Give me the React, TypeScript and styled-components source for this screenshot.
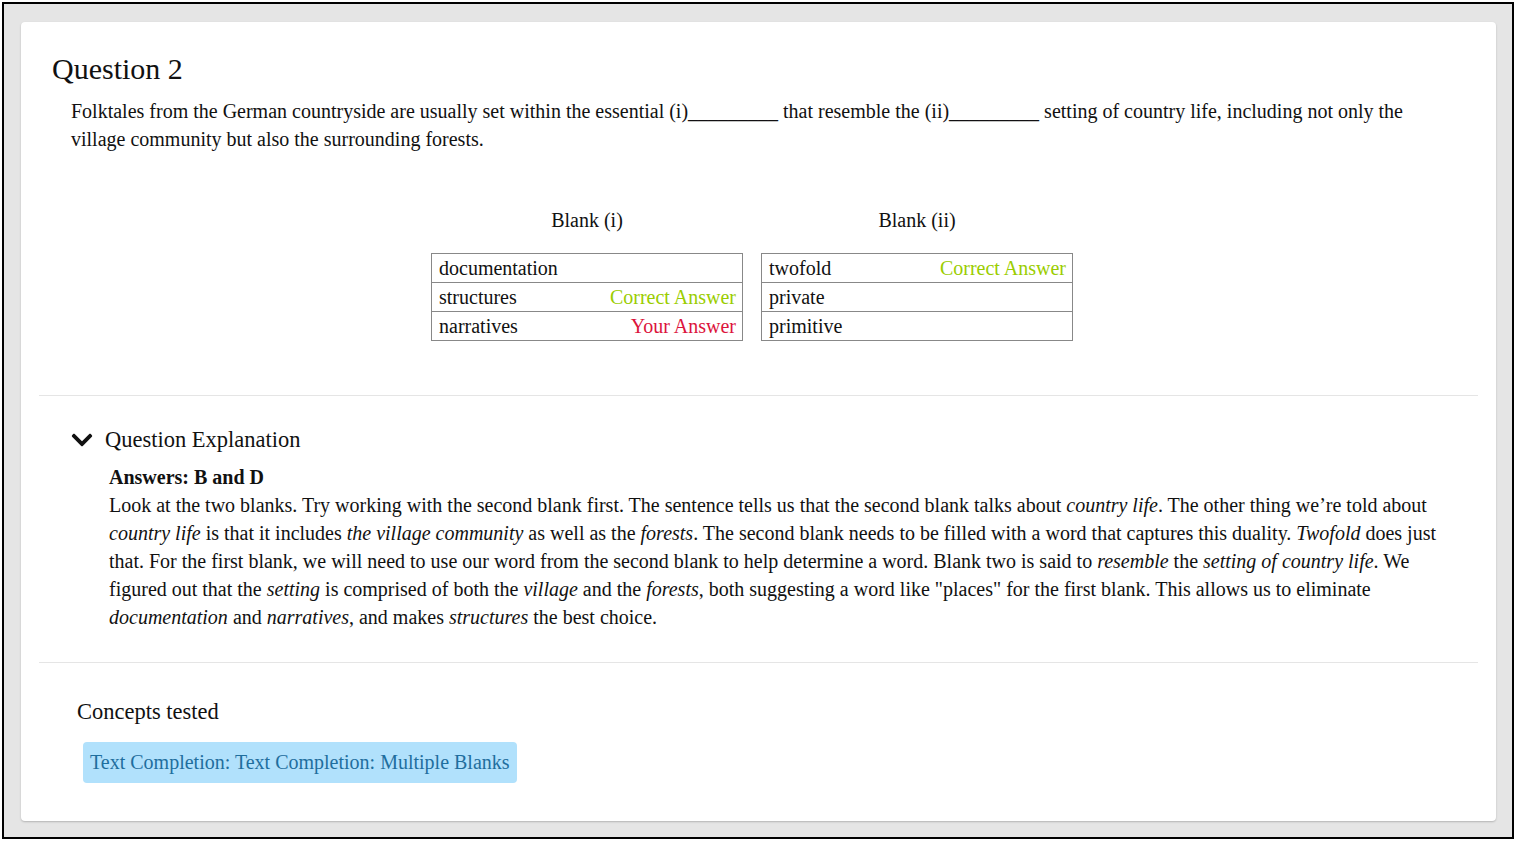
import React from 'react';
import styled, { createGlobalStyle } from 'styled-components';
import { FaChevronDown } from 'react-icons/fa';

const GlobalStyle = createGlobalStyle`
  html, body {
    margin: 0;
    padding: 0;
    background: #fff;
  }
  body {
    font-family: 'Liberation Serif', 'Times New Roman', serif;
    color: #111;
  }
`;

const Frame = styled.div`
  margin: 2px 2px 0 2px;
  border: 2px solid #000;
  background: #e5e5e5;
  padding: 18px 16px 16px 17px;
  box-shadow: 0 2px 0 #fff, 0 4px 0 #000;
`;

const Card = styled.div`
  background: #fff;
  border-radius: 4px;
  box-shadow: 0 1px 2px rgba(0, 0, 0, 0.22);
  padding: 31px 18px 0 18px;
`;

const QuestionSection = styled.section`
  padding: 0 30px 54px 13px;
`;

const Title = styled.h2`
  margin: 0 0 12px 0;
  font-size: 30px;
  line-height: 32px;
  font-weight: normal;
`;

const Prompt = styled.p`
  margin: 0 0 53px 19px;
  font-size: 20px;
  line-height: 28px;
`;

const Blanks = styled.div`
  display: flex;
  justify-content: center;
  gap: 18px;
  padding-left: 4px;
`;

const BlankColumn = styled.div`
  display: flex;
  flex-direction: column;
  align-items: center;
  gap: 19px;
`;

const BlankHeader = styled.div`
  font-size: 20px;
  line-height: 28px;
`;

const ChoiceTable = styled.table`
  width: 312px;
  border-collapse: collapse;
  border: 1px solid #888;
  font-size: 20px;
`;

const ChoiceCell = styled.td`
  border-top: 1px solid #888;
  height: 28px;
  padding: 0 6px 0 7px;
  line-height: 28px;
`;

const ChoiceRow = styled.div`
  display: flex;
  justify-content: space-between;
`;

const Mark = styled.span<{ $kind: 'correct' | 'yours' }>`
  color: ${(p) => (p.$kind === 'correct' ? '#9acd00' : '#dc143c')};
`;

const Divider = styled.hr`
  margin: 0;
  border: none;
  border-top: 1px solid #e5e5e5;
`;

const ExplanationSection = styled.section`
  padding: 31px 40px 31px 33px;
`;

const ExplanationHeader = styled.div`
  display: flex;
  align-items: center;
  gap: 11px;
  font-size: 22.5px;
  line-height: 26px;
  margin-bottom: 10px;
  svg {
    flex: none;
    margin-left: -2px;
  }
`;

const ExplanationBody = styled.div`
  padding-left: 37px;
  font-size: 20px;
  line-height: 28px;
`;

const Answers = styled.div`
  font-weight: bold;
`;

const Para = styled.p`
  margin: 0;
`;

const ConceptsSection = styled.section`
  padding: 36px 38px 38px 38px;
`;

const ConceptsTitle = styled.div`
  font-size: 22.5px;
  line-height: 26px;
  margin-bottom: 17px;
`;

const Tag = styled.span`
  display: inline-block;
  margin-left: 6px;
  padding: 7px;
  background: #b1e1fc;
  color: #1f6e9e;
  border-radius: 4px;
  font-size: 20px;
  line-height: 27px;
`;

type Choice = { text: string; mark?: 'correct' | 'yours' };

const blanks: { title: string; choices: Choice[] }[] = [
  {
    title: 'Blank (i)',
    choices: [
      { text: 'documentation' },
      { text: 'structures', mark: 'correct' },
      { text: 'narratives', mark: 'yours' },
    ],
  },
  {
    title: 'Blank (ii)',
    choices: [
      { text: 'twofold', mark: 'correct' },
      { text: 'private' },
      { text: 'primitive' },
    ],
  },
];

export default function App() {
  return (
    <>
      <GlobalStyle />
      <Frame>
        <Card>
          <QuestionSection>
            <Title>Question 2</Title>
            <Prompt>
              Folktales from the German countryside are usually set within the essential
              (i)_________ that resemble the (ii)_________ setting of country life, including
              not only the village community but also the surrounding forests.
            </Prompt>
            <Blanks>
              {blanks.map((b) => (
                <BlankColumn key={b.title}>
                  <BlankHeader>{b.title}</BlankHeader>
                  <ChoiceTable>
                    <tbody>
                      {b.choices.map((c) => (
                        <tr key={c.text}>
                          <ChoiceCell>
                            <ChoiceRow>
                              <span>{c.text}</span>
                              {c.mark && (
                                <Mark $kind={c.mark}>
                                  {c.mark === 'correct' ? 'Correct Answer' : 'Your Answer'}
                                </Mark>
                              )}
                            </ChoiceRow>
                          </ChoiceCell>
                        </tr>
                      ))}
                    </tbody>
                  </ChoiceTable>
                </BlankColumn>
              ))}
            </Blanks>
          </QuestionSection>

          <Divider />

          <ExplanationSection>
            <ExplanationHeader>
              <FaChevronDown size={24} />
              <span>Question Explanation</span>
            </ExplanationHeader>
            <ExplanationBody>
              <Answers>Answers: B and D</Answers>
              <Para>
                Look at the two blanks. Try working with the second blank first. The sentence
                tells us that the second blank talks about <i>country life</i>. The other thing
                we’re told about <i>country life</i> is that it includes{' '}
                <i>the village community</i> as well as the <i>forests</i>. The second blank
                needs to be filled with a word that captures this duality. <i>Twofold</i> does
                just that. For the first blank, we will need to use our word from the second
                blank to help determine a word. Blank two is said to <i>resemble</i> the{' '}
                <i>setting of country life</i>. We figured out that the <i>setting</i> is
                comprised of both the <i>village</i> and the <i>forests</i>, both suggesting a
                word like "places" for the first blank. This allows us to eliminate{' '}
                <i>documentation</i> and <i>narratives</i>, and makes <i>structures</i> the best
                choice.
              </Para>
            </ExplanationBody>
          </ExplanationSection>

          <Divider />

          <ConceptsSection>
            <ConceptsTitle>Concepts tested</ConceptsTitle>
            <Tag>Text Completion: Text Completion: Multiple Blanks</Tag>
          </ConceptsSection>
        </Card>
      </Frame>
    </>
  );
}
